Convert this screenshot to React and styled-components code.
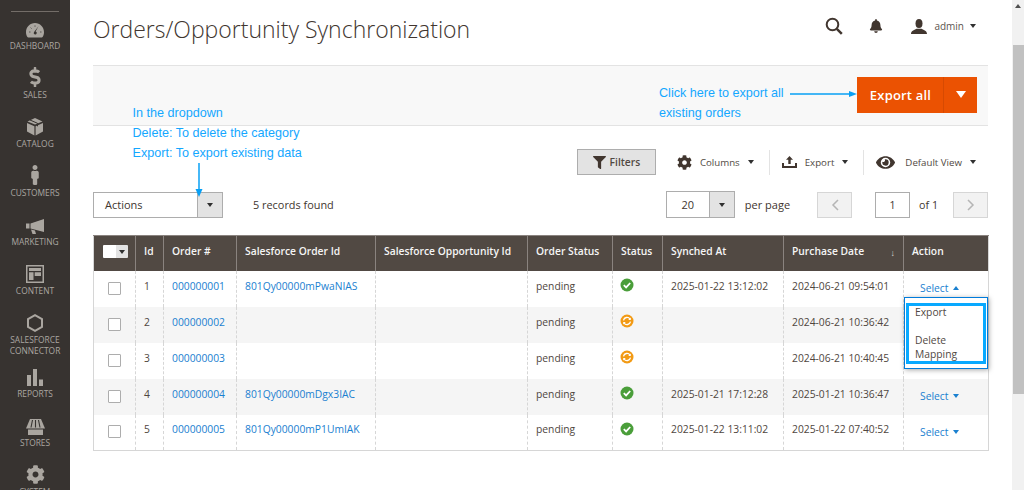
import styled, { createGlobalStyle } from 'styled-components'
import { FaDollarSign, FaMale, FaCog, FaFilter, FaEye, FaBell } from 'react-icons/fa'

const GlobalStyle = createGlobalStyle`
    html, body {
        margin: 0;
        height: 100%;
        overflow: hidden;
        font-family: "Open Sans", "Liberation Sans", sans-serif;
        color: #41362f;
    }
    * { box-sizing: border-box; }
`

const Shell = styled.div`
    display: flex;
    height: 490px;
    width: 1024px;
    overflow: hidden;
`

const Side = styled.nav`
    width: 70px;
    flex: none;
    background: #373330;
    padding-top: 11px;
    display: flex;
    flex-direction: column;
    align-items: center;
`

const SideRule = styled.div`
    width: 48px;
    height: 1px;
    background: #736d68;
    flex: none;
`

const SideItem = styled.div`
    height: ${p => p.$tall ? 60 : 49}px;
    flex: none;
    width: 100%;
    display: flex;
    flex-direction: column;
    align-items: center;
    justify-content: flex-end;
    color: #aaa6a0;
    margin-top: ${p => p.$first ? -11 : 0}px;
    margin-bottom: ${p => p.$tall ? -6 : 0}px;
    span {
        font-size: 8.4px;
        line-height: 11px;
        text-align: center;
        white-space: pre-line;
        margin-bottom: -1px;
    }
    svg { display: block; margin-bottom: 2px; color: #aaa6a0; }
`

const Main = styled.main`
    flex: 1;
    position: relative;
    background: #fff;
    padding: 0 24px 0 23px;
    min-width: 0;
`

const Scrollbar = styled.div`
    width: 12px;
    flex: none;
    background: #f1f1f1;
    padding-top: 45px;
    position: relative;
    &::before {
        content: '';
        position: absolute;
        top: 4px;
        left: 3px;
        border: 3px solid transparent;
        border-top: 0;
        border-bottom: 4px solid #505050;
    }
`

const Thumb = styled.div`
    height: 349px;
    margin-left: 1px;
    background: #c1c1c1;
`

const Header = styled.header`
    height: 65px;
    display: flex;
    align-items: flex-start;
    justify-content: space-between;
`

const Title = styled.h1`
    margin: 12px 0 0;
    font-size: 23px;
    line-height: 34px;
    font-weight: 300;
    color: #41362f;
    white-space: nowrap;
`

const HeaderTools = styled.div`
    display: flex;
    align-items: center;
    height: 18px;
    margin-top: 17px;
    padding-right: 12px;
    color: #41362f;
`

const Search = styled.svg`
    width: 18px;
    height: 18px;
    margin-right: 26px;
`

const UserBlock = styled.div`
    display: flex;
    align-items: center;
    margin-left: 28px;
    font-size: 10px;
    color: #5c5550;
    svg { margin-right: 7px; color: #41362f; }
`

const Caret = styled.i`
    display: inline-block;
    width: 0;
    height: 0;
    margin-left: ${p => p.$gap ?? 6}px;
    border-left: ${p => p.$size ?? 3.5}px solid transparent;
    border-right: ${p => p.$size ?? 3.5}px solid transparent;
    ${p => p.$up
        ? `border-bottom: ${p.$h ?? 4}px solid ${p.$color || '#303030'};`
        : `border-top: ${p.$h ?? 4}px solid ${p.$color || '#303030'};`}
`

const ActionBand = styled.section`
    height: 61px;
    background: #f8f8f8;
    border-top: 1px solid #e3e3e3;
    border-bottom: 1px solid #e3e3e3;
    display: flex;
    align-items: center;
    justify-content: flex-end;
    padding-right: 11px;
    padding-bottom: 2px;
`

const SplitButton = styled.div`
    display: flex;
    width: 120px;
    height: 36px;
    background: #eb5202;
    color: #fff;
    font-size: 13px;
    font-weight: 600;
    letter-spacing: .2px;
`

const SplitMain = styled.div`
    width: 87px;
    display: flex;
    align-items: center;
    justify-content: center;
    padding-left: 1px;
    border-right: 1px solid #d64a02;
`

const SplitToggle = styled.div`
    flex: 1;
    display: flex;
    align-items: center;
    justify-content: center;
`

const Toolbar = styled.div`
    display: flex;
    align-items: center;
    justify-content: flex-end;
    height: 26px;
    margin-top: 23px;
    padding-right: 12px;
`

const FilterButton = styled.button`
    width: 79px;
    height: 26px;
    display: flex;
    align-items: center;
    justify-content: center;
    gap: 4px;
    background: #e3e3e3;
    border: 1px solid #adadad;
    color: #514943;
    font: 600 10.3px "Open Sans", sans-serif;
    margin-right: 21px;
    padding: 0;
    svg { color: #41362f; }
`

const ToolItem = styled.div`
    display: flex;
    align-items: center;
    height: 25px;
    font-size: 9.7px;
    color: #514943;
    padding-right: ${p => p.$last ? 0 : 15}px;
    margin-right: ${p => p.$last ? 0 : 12}px;
    border-right: ${p => p.$last ? 0 : '1px solid #e3e3e3'};
    svg { margin-right: ${p => p.$iconGap ?? 8}px; color: #41362f; }
    i { margin-left: 8px; }
`

const PagerRow = styled.div`
    display: flex;
    align-items: center;
    height: 27px;
    margin-top: 16px;
`

const SelectBox = styled.div`
    display: flex;
    height: ${p => p.$h ?? 26}px;
    width: ${p => p.$w}px;
    border: 1px solid #adadad;
    font-size: 11px;
    color: #41362f;
    flex: none;
`

const SelectValue = styled.div`
    flex: 1;
    display: flex;
    align-items: center;
    justify-content: ${p => p.$center ? 'center' : 'flex-start'};
    padding-left: ${p => p.$center ? 0 : 11}px;
`

const SelectArrow = styled.div`
    width: 25px;
    background: #e3e3e3;
    border-left: 1px solid #adadad;
    display: flex;
    align-items: center;
    justify-content: center;
    i { margin-left: 0; }
`

const RecordCount = styled.div`
    font-size: 10.9px;
    color: #41362f;
    margin-left: 30px;
    flex: 1;
`

const PerPage = styled.span`
    font-size: 11px;
    margin: 0 27px 0 10px;
`

const PageButton = styled.div`
    width: 35px;
    height: 26px;
    background: #f2f2f2;
    border: 1px solid #d6d6d6;
    display: flex;
    align-items: center;
    justify-content: center;
    color: #b5b5b5;
`

const PageInput = styled.div`
    width: 35px;
    height: 26px;
    margin-left: 23px;
    border: 1px solid #adadad;
    font-size: 10.5px;
    display: flex;
    align-items: center;
    justify-content: center;
`

const OfText = styled.span`
    font-size: 10.7px;
    margin: 0 15px 0 9px;
`

const Table = styled.table`
    width: 895px;
    margin-top: 17px;
    border-collapse: collapse;
    table-layout: fixed;
    border-bottom: 1px solid #d6d6d6;
    border-left: 1px solid #d6d6d6;
    border-right: 1px solid #d6d6d6;
    font-size: 10.3px;
`

const Th = styled.th`
    height: 35px;
    background: #514943;
    color: #f5f5f5;
    font-weight: 600;
    font-size: 10.3px;
    text-align: left;
    padding: 0 0 5px 8px;
    border-left: 1px solid #8a837f;
    border-top: 1px solid #8a837f;
    white-space: nowrap;
    position: relative;
    &:first-child { border-left: 0; padding: 0 0 3px 9px; }
`

const SortMark = styled.span`
    position: absolute;
    right: 8px;
    top: 10px;
    font-size: 9px;
    font-weight: 400;
    color: #d6d6d6;
`

const HeadCheck = styled.div`
    display: flex;
    width: 25px;
    height: 13px;
    border-radius: 1px;
    overflow: hidden;
    div:first-child { width: 13px; background: #fff; }
    div:last-child {
        flex: 1;
        background: #e3e3e3;
        display: flex;
        align-items: center;
        justify-content: center;
    }
    i { margin: 0; }
`

const Tr = styled.tr`
    height: 36px;
    background: ${p => p.$alt ? '#f5f5f5' : '#fff'};
`

const Td = styled.td`
    padding: 0 0 6px 8px;
    border-left: 1px dashed #d6d6d6;
    color: #4f4640;
    white-space: nowrap;
    overflow: visible;
    &:first-child { border-left: 0; padding: 0 0 1px 14px; }
    a { color: #1a80d0; text-decoration: none; }
`

const Check = styled.div`
    width: 13px;
    height: 13px;
    background: #fff;
    border: 1px solid #adadad;
    border-radius: 1px;
`

const StatusIcon = styled.svg`
    display: block;
    width: 14px;
    height: 14px;
    margin: -1px 0 0 -1px;
`

const SelectLink = styled.div`
    display: flex;
    align-items: center;
    color: #1a80d0;
    padding: 5px 0 0 8px;
    i { margin-left: 5px; }
`

const Menu = styled.div`
    position: absolute;
    left: 834px;
    top: 297px;
    width: 84px;
    height: 72px;
    background: #fff;
    border: 1px solid #007bdb;
    box-shadow: 1px 1px 5px rgba(0, 0, 0, .35);
    padding: 5px 1px 0;
`

const MenuFrame = styled.div`
    height: 61px;
    border: 3px solid #08a9ff;
    font-size: 10.3px;
    line-height: 14px;
    color: #514943;
    padding-left: 6px;
    div:first-child { margin: -1px 0 14px; }
`

const Note = styled.div`
    position: absolute;
    left: ${p => p.$x}px;
    top: ${p => p.$y}px;
    font: 12.6px/20px "Liberation Sans", Arial, sans-serif;
    color: #14a7ff;
    white-space: nowrap;
`

const NoteArrow = styled.svg`
    position: absolute;
    left: ${p => p.$x}px;
    top: ${p => p.$y}px;
`

const Gauge = () => (
    <svg width="18" height="15" viewBox="0 0 18 15" fill="currentColor">
        <path d="M9 0C4 0 0 4 0 9.2 0 11 .5 12.7 1.4 14c.2.3.5.4.8.4h13.6c.3 0 .6-.1.8-.4.9-1.3 1.4-3 1.4-4.8C18 4 14 0 9 0z" />
        <path d="M12.5 3.2 9.6 8.4a1.5 1.5 0 1 1-1.5.5z" fill="#373330" />
        <path d="M3 9h1.5M4.6 4.6l1 1M9 2.4v1.4M14 9h1.5" stroke="#373330" strokeWidth=".7" />
    </svg>
)

const Cube = () => (
    <svg width="16" height="18" viewBox="0 0 16 18" fill="currentColor">
        <path d="M8 0 .5 3.4 8 6.6l7.5-3.2z" />
        <path d="M0 5v8.6l7.4 4V8.2zM16 5v8.6l-7.4 4V8.2z" />
        <path d="m3 2 7.5 3.3v3" stroke="#373330" strokeWidth="1" fill="none" />
    </svg>
)

const Megaphone = () => (
    <svg width="18" height="15" viewBox="0 0 18 15" fill="currentColor">
        <path d="M0 4.5h3.5v5H0zM4.5 4.5 18 0v13L4.5 9.5zM5 10.5l4 1 1 3.5H6.5z" />
    </svg>
)

const ContentIcon = () => (
    <svg width="18" height="18" viewBox="0 0 18 18" fill="currentColor">
        <path fillRule="evenodd" d="M0 0h18v18H0zM1.5 1.5v15h15v-15z" />
        <path d="M3 3h12v3H3zM3 7.2h4.5V15H3zM8.7 7.2H15V11H8.7z" />
    </svg>
)

const Hexagon = () => (
    <svg width="16" height="18" viewBox="0 0 16 18" fill="none" stroke="currentColor" strokeWidth="2">
        <path d="M8 1.2 15 5v8l-7 3.8L1 13V5z" />
    </svg>
)

const Bars = () => (
    <svg width="16" height="17" viewBox="0 0 16 17" fill="currentColor">
        <path d="M0 6h4v11H0zM6 0h4v17H6zM12 10.5h4V17h-4z" />
    </svg>
)

const Store = () => (
    <svg width="19" height="16" viewBox="0 0 19 16" fill="currentColor">
        <path d="M4 0h11l4 9.5H0z" />
        <path d="M6.5 1 5 8.5M9.5 1v7.5M12.5 1 14 8.5" stroke="#373330" strokeWidth="1.1" />
        <path d="M2 10.5h15V16H2z" />
    </svg>
)

const Upload = () => (
    <svg width="15" height="12" viewBox="0 0 15 12" fill="currentColor">
        <path d="M7.5 0 11 3.8H8.7V8H6.3V3.8H4z" />
        <path d="M0 7h2v3h11V7h2v5H0z" />
    </svg>
)

const UserIcon = () => (
    <svg width="16" height="15" viewBox="0 0 16 15" fill="currentColor">
        <ellipse cx="8" cy="4.5" rx="3.5" ry="4.5" />
        <path d="M0 15c0-3 3-4 5.5-5.2h5C13 11 16 12 16 15z" />
    </svg>
)

const StatusOk = () => (
    <StatusIcon viewBox="0 0 14 14">
        <circle cx="7" cy="7" r="6.5" fill="#4a9e3a" />
        <path d="m3.8 7.2 2.3 2.2 4.1-4.4" stroke="#fff" strokeWidth="1.8" fill="none" />
    </StatusIcon>
)

const StatusSync = () => (
    <StatusIcon viewBox="0 0 14 14">
        <circle cx="7" cy="7" r="6.5" fill="#f29a14" />
        <path d="M3.5 6.3A3.6 3.6 0 0 1 10 5M10.5 7.7A3.6 3.6 0 0 1 4 9" stroke="#fff" strokeWidth="1.3" fill="none" />
        <path d="M10.8 3.4V6H8.2zM3.2 10.6V8h2.6z" fill="#fff" />
    </StatusIcon>
)

const sideItems = [
    { label: 'DASHBOARD', icon: <Gauge /> },
    { label: 'SALES', icon: <FaDollarSign size={20} /> },
    { label: 'CATALOG', icon: <Cube /> },
    { label: 'CUSTOMERS', icon: <FaMale size={20} /> },
    { label: 'MARKETING', icon: <Megaphone /> },
    { label: 'CONTENT', icon: <ContentIcon /> },
    { label: 'SALESFORCE\nCONNECTOR', icon: <Hexagon />, tall: true },
    { label: 'REPORTS', icon: <Bars /> },
    { label: 'STORES', icon: <Store /> },
    { label: 'SYSTEM', icon: <FaCog size={19} /> },
]

const columns = [
    ['', 42], ['Id', 28], ['Order #', 73], ['Salesforce Order Id', 139], ['Salesforce Opportunity Id', 152],
    ['Order Status', 85], ['Status', 50], ['Synched At', 121], ['Purchase Date', 120], ['Action', 85],
]

const rows = [
    { id: 1, order: '000000001', sf: '801Qy00000mPwaNIAS', ok: true, synched: '2025-01-22 13:12:02', date: '2024-06-21 09:54:01', open: true },
    { id: 2, order: '000000002', sf: '', ok: false, synched: '', date: '2024-06-21 10:36:42' },
    { id: 3, order: '000000003', sf: '', ok: false, synched: '', date: '2024-06-21 10:40:45' },
    { id: 4, order: '000000004', sf: '801Qy00000mDgx3IAC', ok: true, synched: '2025-01-21 17:12:28', date: '2025-01-21 10:36:47' },
    { id: 5, order: '000000005', sf: '801Qy00000mP1UmIAK', ok: true, synched: '2025-01-22 13:11:02', date: '2025-01-22 07:40:52' },
]

function App() {
    return (
        <Shell>
            <GlobalStyle />
            <Side>
                <SideRule />
                {sideItems.map((item, i) => (
                    <SideItem key={item.label} $tall={item.tall} $first={i === 0}>
                        {item.icon}
                        <span>{item.label}</span>
                    </SideItem>
                ))}
            </Side>

            <Main>
                <Header>
                    <Title>Orders/Opportunity Synchronization</Title>
                    <HeaderTools>
                        <Search viewBox="0 0 18 18" fill="none" stroke="#41362f">
                            <circle cx="7.5" cy="7.5" r="5.8" strokeWidth="2" />
                            <path d="m11.8 11.8 5 5" strokeWidth="2.5" />
                        </Search>
                        <FaBell size={14} />
                        <UserBlock>
                            <UserIcon />
                            admin
                            <Caret />
                        </UserBlock>
                    </HeaderTools>
                </Header>

                <ActionBand>
                    <SplitButton>
                        <SplitMain>Export all</SplitMain>
                        <SplitToggle><Caret $gap={0} $size={5} $h={7} $color="#fff" /></SplitToggle>
                    </SplitButton>
                </ActionBand>

                <Toolbar>
                    <FilterButton><FaFilter size={13} />Filters</FilterButton>
                    <ToolItem><FaCog size={15} />Columns<Caret /></ToolItem>
                    <ToolItem><Upload />Export<Caret /></ToolItem>
                    <ToolItem $last $iconGap={10}><FaEye size={19} />Default View<Caret /></ToolItem>
                </Toolbar>

                <PagerRow>
                    <SelectBox $w={130}>
                        <SelectValue>Actions</SelectValue>
                        <SelectArrow><Caret /></SelectArrow>
                    </SelectBox>
                    <RecordCount>5 records found</RecordCount>
                    <SelectBox $w={69} $h={27}>
                        <SelectValue $center>20</SelectValue>
                        <SelectArrow><Caret /></SelectArrow>
                    </SelectBox>
                    <PerPage>per page</PerPage>
                    <PageButton>
                        <svg width="8" height="12" viewBox="0 0 8 12" fill="none" stroke="currentColor" strokeWidth="1.5"><path d="M7 1 2 6l5 5" /></svg>
                    </PageButton>
                    <PageInput>1</PageInput>
                    <OfText>of 1</OfText>
                    <PageButton>
                        <svg width="8" height="12" viewBox="0 0 8 12" fill="none" stroke="currentColor" strokeWidth="1.5"><path d="m1 1 5 5-5 5" /></svg>
                    </PageButton>
                </PagerRow>

                <Table>
                    <colgroup>
                        {columns.map(([name, w]) => <col key={name} style={{ width: w }} />)}
                    </colgroup>
                    <thead>
                        <tr>
                            {columns.map(([name], i) => (
                                <Th key={name}>
                                    {i === 0 ? <HeadCheck><div /><div><Caret /></div></HeadCheck> : name}
                                    {name === 'Purchase Date' && <SortMark>↓</SortMark>}
                                </Th>
                            ))}
                        </tr>
                    </thead>
                    <tbody>
                        {rows.map((row, i) => (
                            <Tr key={row.id} $alt={i % 2 === 1}>
                                <Td><Check /></Td>
                                <Td>{row.id}</Td>
                                <Td><a href="#">{row.order}</a></Td>
                                <Td><a href="#">{row.sf}</a></Td>
                                <Td />
                                <Td>pending</Td>
                                <Td>{row.ok ? <StatusOk /> : <StatusSync />}</Td>
                                <Td>{row.synched}</Td>
                                <Td>{row.date}</Td>
                                <Td>
                                    {(row.ok || row.open) && (
                                        <SelectLink>Select<Caret $up={row.open} $color="#1a80d0" /></SelectLink>
                                    )}
                                </Td>
                            </Tr>
                        ))}
                    </tbody>
                </Table>

                <Menu>
                    <MenuFrame>
                        <div>Export</div>
                        <div>Delete<br />Mapping</div>
                    </MenuFrame>
                </Menu>

                <Note $x={589} $y={83}>Click here to export all<br />existing orders</Note>
                <NoteArrow $x={720} $y={89} width="67" height="10" viewBox="0 0 67 10">
                    <path d="M0 5h60" stroke="#08a0f5" strokeWidth="1.5" />
                    <path d="m67 5-8-3v6z" fill="#08a0f5" />
                </NoteArrow>
                <Note $x={62.5} $y={103}>In the dropdown<br />Delete: To delete the category<br />Export: To export existing data</Note>
                <NoteArrow $x={124} $y={163} width="10" height="34" viewBox="0 0 10 34">
                    <path d="M5 0v27" stroke="#08a0f5" strokeWidth="1.5" />
                    <path d="m5 34-3.5-8h7z" fill="#08a0f5" />
                </NoteArrow>
            </Main>

            <Scrollbar><Thumb /></Scrollbar>
        </Shell>
    )
}

export default App
